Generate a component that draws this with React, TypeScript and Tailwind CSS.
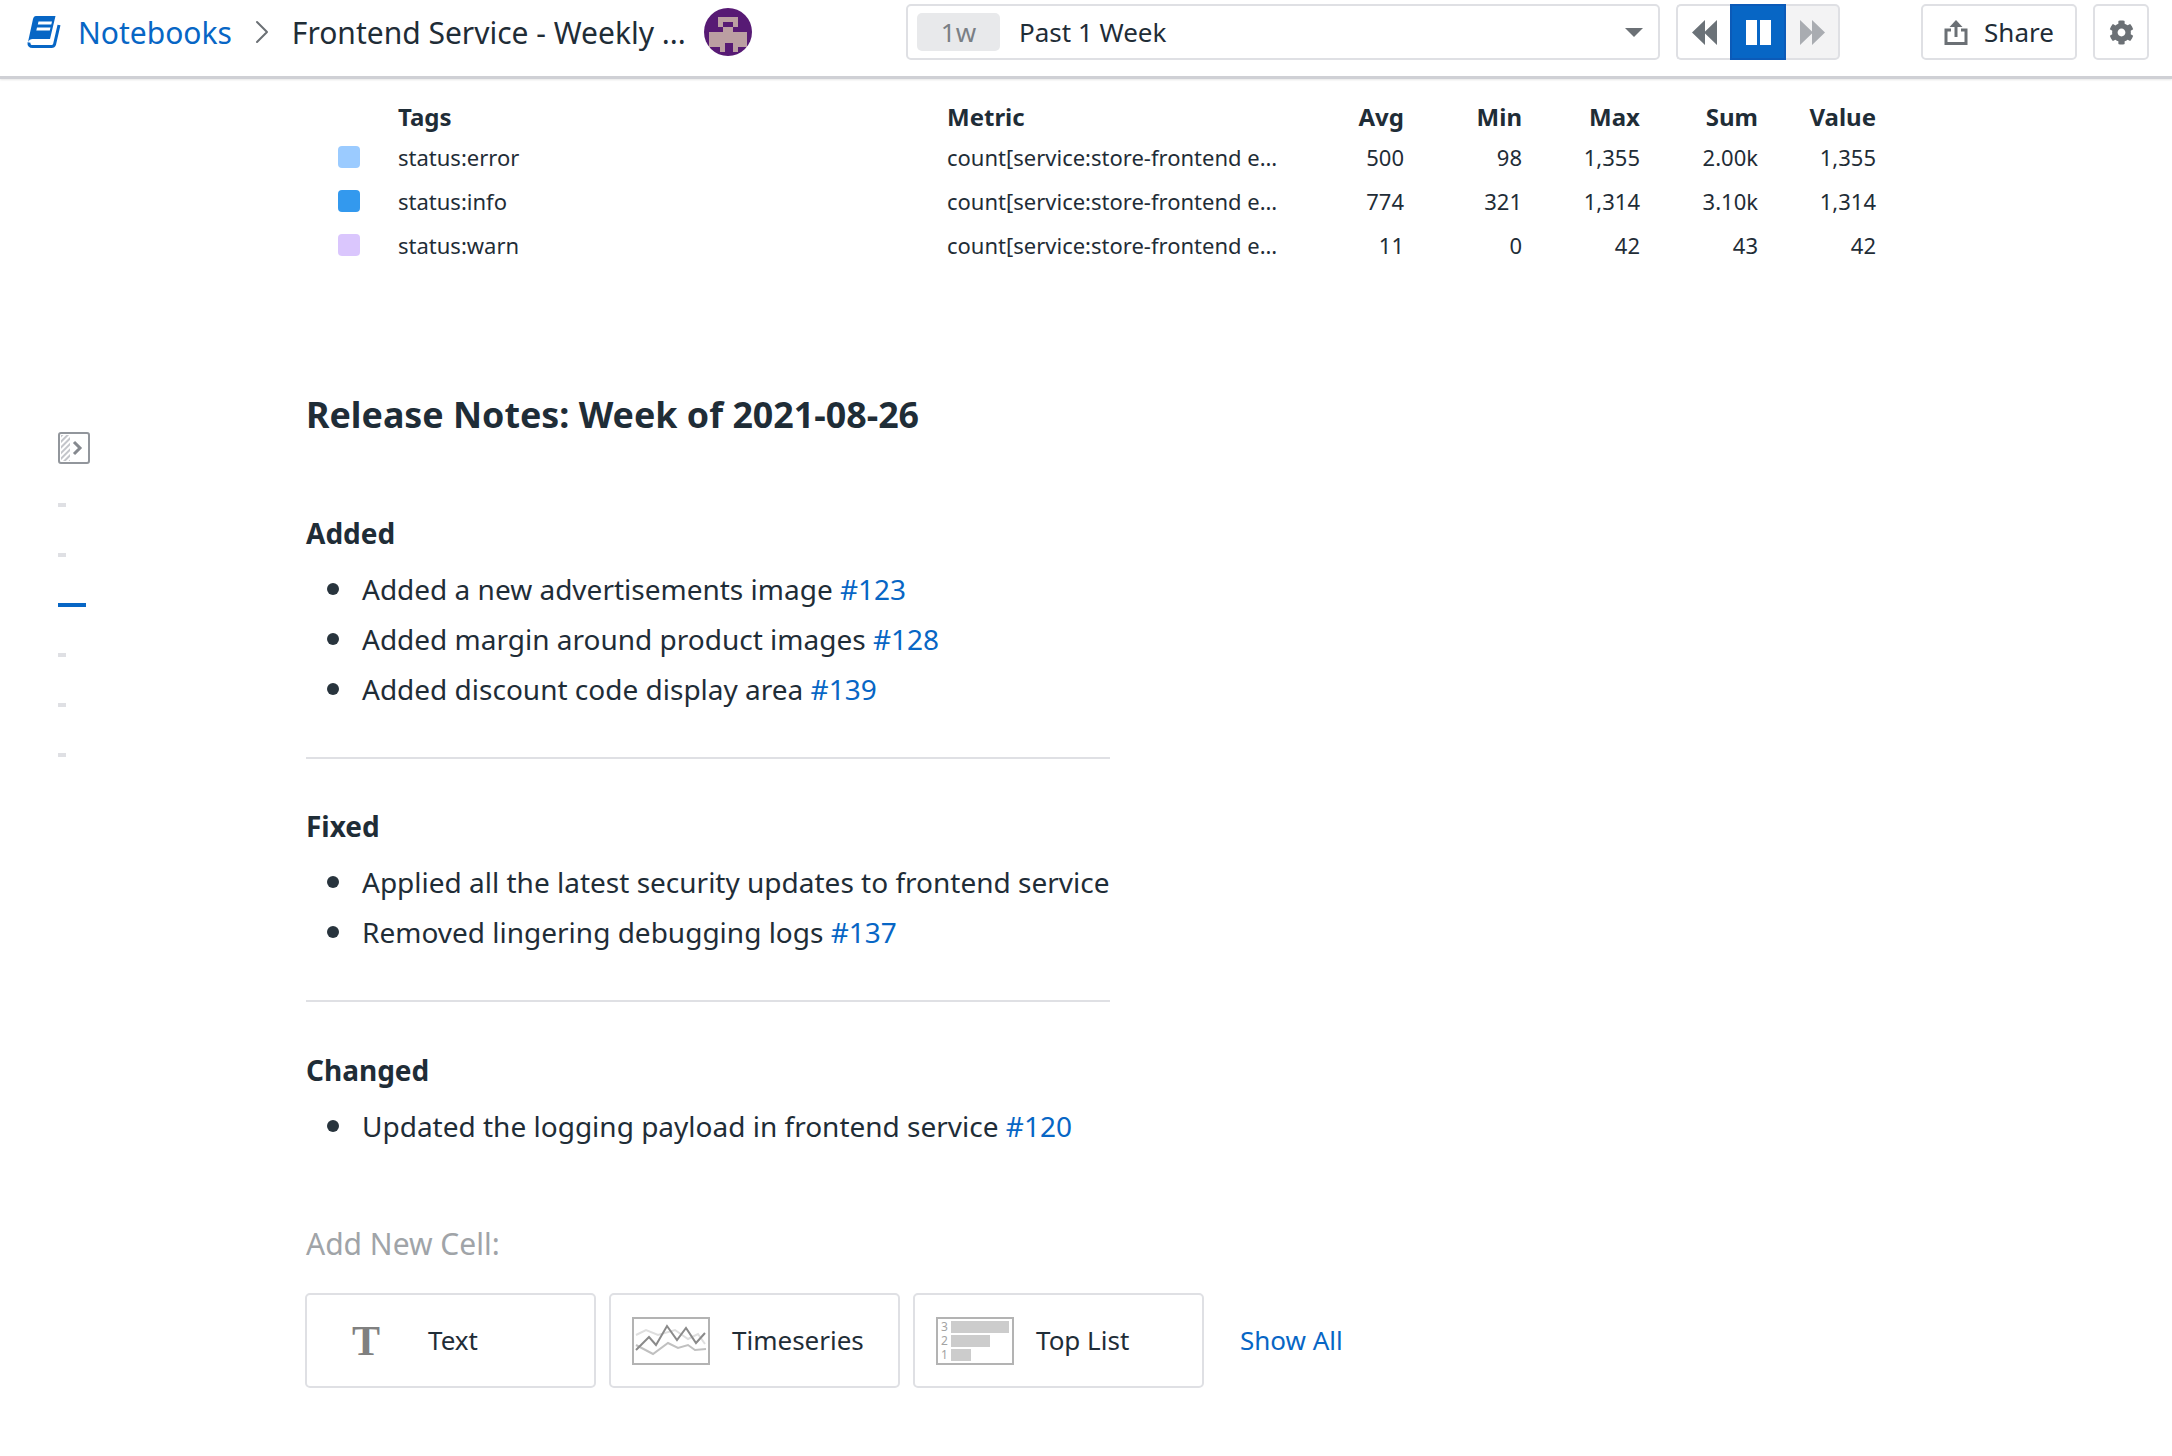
import { ChevronRight } from "lucide-react";
import { FaCog } from "react-icons/fa";

const font = { fontFamily: '"Noto Sans", sans-serif' };

const rows = [
  { tag: "status:error", color: "bg-[#9bcbff]", avg: "500", min: "98", max: "1,355", sum: "2.00k", value: "1,355" },
  { tag: "status:info", color: "bg-[#3399ee]", avg: "774", min: "321", max: "1,314", sum: "3.10k", value: "1,314" },
  { tag: "status:warn", color: "bg-[#dac6fd]", avg: "11", min: "0", max: "42", sum: "43", value: "42" },
];

function BookIcon() {
  return (
    <svg width="34" height="32" viewBox="0 0 34 32">
      <path d="M9 0H28.500L23 23H5.500C3.500 23 2 24 1 26L6 3C6.500 1 7.500 0 9 0z" fill="#0766c5" />
      <path d="M2 26.500C1.700 29 3 30.500 5.500 30.500H24.500C26 30.500 27 30 27.500 28.500L32 9" fill="none" stroke="#0766c5" strokeWidth="3" />
      <path d="M11.500 5.500H25l-.7 3H10.800zM10 11.500h13.500l-.7 3H9.300z" fill="#fff" />
    </svg>
  );
}

function Avatar() {
  return (
    <svg width="48" height="48" viewBox="0 0 48 48">
      <circle cx="24" cy="24" r="24" fill="#571a74" />
      <path d="M14 9h20v10h-5v5h14v15h-9v5h-5v-9h-8v9h-5v-5H5V24h14v-5h-5z" fill="#bb9fa2" />
      <rect x="19" y="14" width="10" height="5" fill="#571a74" />
    </svg>
  );
}

function PanelIcon() {
  return (
    <svg width="32" height="32" viewBox="0 0 32 32">
      <defs>
        <pattern id="hatch" width="4" height="4" patternUnits="userSpaceOnUse" patternTransform="rotate(45)">
          <rect width="2" height="4" fill="#c3c5ca" />
        </pattern>
      </defs>
      <rect x="3" y="3" width="9" height="26" fill="url(#hatch)" />
      <rect x="1" y="1" width="30" height="30" rx="2" fill="none" stroke="#92969c" strokeWidth="2" />
      <path d="M16 10l6 6-6 6" fill="none" stroke="#85898f" strokeWidth="3" />
    </svg>
  );
}

function TimeseriesIcon() {
  return (
    <svg width="78" height="48" viewBox="0 0 78 48">
      <rect x="1" y="1" width="76" height="46" fill="#fff" stroke="#b3b3b3" strokeWidth="2" />
      <path d="M4 18L14 13L26 18L43 13L56 22L66 17L73 27" fill="none" stroke="#dedede" strokeWidth="2" />
      <path d="M4 28L21 37L36 26L46 31L56 28L63 33L74 32" fill="none" stroke="#c0c0c0" strokeWidth="2" />
      <path d="M4 33L17 20L24 28L35 9L45 23L54 11L64 26L73 16" fill="none" stroke="#8a8a8a" strokeWidth="2" />
    </svg>
  );
}

function TopListIcon() {
  return (
    <div className="flex h-[48px] w-[78px] flex-col justify-center gap-[2px] border-2 border-[#b3b3b3] px-[3px]">
      {[
        { n: "3", w: "w-[58px]" },
        { n: "2", w: "w-[39px]" },
        { n: "1", w: "w-[20px]" },
      ].map((b) => (
        <div key={b.n} className="flex h-[12px] items-center gap-[3px] text-[12px] leading-none text-[#a3a3a3]">
          <span className="w-[7px]">{b.n}</span>
          <span className={`h-[12px] bg-[#cccccc] ${b.w}`} />
        </div>
      ))}
    </div>
  );
}

function Bullet({ children }: { children: React.ReactNode }) {
  return (
    <li className="flex h-[50px] items-center text-[28px] text-[#1f2d37]">
      <span className="mr-[23px] ml-[21px] size-[12px] rounded-full bg-[#28343d]" />
      <span>{children}</span>
    </li>
  );
}

function Issue({ n }: { n: string }) {
  return <span className="text-[#0766c5]">{n}</span>;
}

function AddCard({ icon, label }: { icon: React.ReactNode; label: string }) {
  return (
    <div className="flex h-[95px] w-[291px] items-center rounded-[5px] border-2 border-[#dfe0e4] pl-[21px]">
      {icon}
      <span className="ml-[22px] text-[26px] text-[#1f2d37]">{label}</span>
    </div>
  );
}

function Head({ children, right }: { children: React.ReactNode; right?: boolean }) {
  return <span className={`text-[24px] font-bold ${right ? "text-right" : ""}`}>{children}</span>;
}

export default function App() {
  return (
    <div style={font} className="h-[1456px] w-[2172px] overflow-hidden bg-white text-[#1f2d37]">
      <header className="flex h-[79px] items-center border-b-[3px] border-[#cfd0d5] pb-[12px] shadow-[0_1px_2px_rgba(0,0,0,0.1)]">
        <div className="ml-[27px] flex w-[879px] items-center">
          <BookIcon />
          <span className="ml-[17px] text-[30px] text-[#0766c5]">Notebooks</span>
          <ChevronRight className="mx-[10px] size-[40px] text-[#6b7075]" strokeWidth={1.2} />
          <span className="text-[30px]">Frontend Service - Weekly ...</span>
          <span className="ml-[18px]">
            <Avatar />
          </span>
        </div>

        <div className="flex h-[56px] w-[754px] items-center rounded-[5px] border-2 border-[#dfe0e4] pl-[9px]">
          <span className="flex h-[38px] w-[83px] items-center justify-center rounded-[5px] bg-[#e8e9eb] text-[26px] text-[#7a7f85]">1w</span>
          <span className="ml-[19px] flex-1 text-[26px]">Past 1 Week</span>
          <span className="mr-[15px] h-0 w-0 border-x-[9px] border-t-[9px] border-x-transparent border-t-[#6b7075]" />
        </div>

        <div className="ml-[16px] flex h-[56px]">
          <span className="flex w-[54px] items-center justify-center rounded-l-[5px] border-y-2 border-l-2 border-[#dfe0e4] text-[#6b7278]">
            <svg width="25" height="25" viewBox="0 0 25 25" fill="currentColor"><path d="M13 0v25L0 12.500zM25 0v25L12 12.500z" /></svg>
          </span>
          <span className="flex w-[56px] items-center justify-center gap-[3px] border-2 border-[#0b5ab8] bg-[#0766c5]">
            <span className="h-[25px] w-[11px] bg-white" />
            <span className="h-[25px] w-[11px] bg-white" />
          </span>
          <span className="flex w-[54px] items-center justify-center rounded-r-[5px] border-y-2 border-r-2 border-[#dfe0e4] bg-[#f3f3f4] text-[#a9acb1]">
            <svg width="25" height="25" viewBox="0 0 25 25" fill="currentColor"><path d="M0 0v25l13-12.500zM12 0v25l13-12.500z" /></svg>
          </span>
        </div>

        <div className="ml-[81px] flex h-[56px] w-[156px] items-center justify-center rounded-[5px] border-2 border-[#dfe0e4]">
          <svg width="24" height="25" viewBox="0 0 24 25" fill="none" stroke="#6b7075" strokeWidth="3">
            <path d="M7 10H2v13.500h20V10h-5" />
            <path d="M12 17V4" />
            <path d="M12 0l6.500 7h-13z" fill="#6b7075" stroke="none" />
          </svg>
          <span className="ml-[16px] text-[26px]">Share</span>
        </div>

        <div className="ml-[16px] flex h-[56px] w-[56px] items-center justify-center rounded-[5px] border-2 border-[#dfe0e4]">
          <FaCog className="size-[25px] text-[#6b7075]" />
        </div>
      </header>

      <section className="pt-[19px] pl-[338px] text-[22px]">
        <div className="grid h-[37px] grid-cols-[60px_549px_332px_125px_118px_118px_118px_118px] items-center">
          <span />
          <Head>Tags</Head>
          <Head>Metric</Head>
          <Head right>Avg</Head>
          <Head right>Min</Head>
          <Head right>Max</Head>
          <Head right>Sum</Head>
          <Head right>Value</Head>
        </div>
        {rows.map((r) => (
          <div key={r.tag} className="grid h-[44px] grid-cols-[60px_549px_332px_125px_118px_118px_118px_118px] items-center">
            <span className={`size-[22px] rounded-[4px] ${r.color}`} />
            <span>{r.tag}</span>
            <span>count[service:store-frontend e…</span>
            <span className="text-right">{r.avg}</span>
            <span className="text-right">{r.min}</span>
            <span className="text-right">{r.max}</span>
            <span className="text-right">{r.sum}</span>
            <span className="text-right">{r.value}</span>
          </div>
        ))}
      </section>

      <div className="flex">
        <aside className="w-[306px] flex-none pt-[165px] pl-[58px]">
          <PanelIcon />
          <div className="mt-[39px] flex flex-col items-start gap-[46px]">
            <span className="h-[4px] w-[8px] bg-[#dfe0e4]" />
            <span className="h-[4px] w-[8px] bg-[#dfe0e4]" />
            <span className="h-[4px] w-[28px] bg-[#0766c5]" />
            <span className="h-[4px] w-[8px] bg-[#dfe0e4]" />
            <span className="h-[4px] w-[8px] bg-[#dfe0e4]" />
            <span className="h-[4px] w-[8px] bg-[#dfe0e4]" />
          </div>
        </aside>

        <main className="flex-1">
          <h1 className="mt-[120px] text-[35.800px] leading-[54px] font-bold">Release Notes: Week of 2021-08-26</h1>

          <h2 className="mt-[71px] text-[28px] leading-[42px] font-bold">Added</h2>
          <ul className="mt-[10px]">
            <Bullet>Added a new advertisements image <Issue n="#123" /></Bullet>
            <Bullet>Added margin around product images <Issue n="#128" /></Bullet>
            <Bullet>Added discount code display area <Issue n="#139" /></Bullet>
          </ul>
          <hr className="mt-[43px] w-[804px] border-t-2 border-[#dfe0e4]" />

          <h2 className="mt-[46px] text-[28px] leading-[42px] font-bold">Fixed</h2>
          <ul className="mt-[10px]">
            <Bullet>Applied all the latest security updates to frontend service</Bullet>
            <Bullet>Removed lingering debugging logs <Issue n="#137" /></Bullet>
          </ul>
          <hr className="mt-[43px] w-[804px] border-t-2 border-[#dfe0e4]" />

          <h2 className="mt-[47px] text-[28px] leading-[42px] font-bold">Changed</h2>
          <ul className="mt-[10px]">
            <Bullet>Updated the logging payload in frontend service <Issue n="#120" /></Bullet>
          </ul>

          <h3 className="mt-[70px] text-[30px] leading-[45px] text-[#a0a4a8]">Add New Cell:</h3>

          <div className="mt-[27px] -ml-px flex items-center gap-[13px]">
            <AddCard
              label="Text"
              icon={<span className="mr-[26px] ml-[24px] w-[28px] text-center text-[42px] leading-none font-bold text-[#808080]" style={{ fontFamily: '"Liberation Serif", serif' }}>T</span>}
            />
            <AddCard label="Timeseries" icon={<TimeseriesIcon />} />
            <AddCard label="Top List" icon={<TopListIcon />} />
            <span className="ml-[23px] text-[26px] text-[#0766c5]">Show All</span>
          </div>
        </main>
      </div>
    </div>
  );
}
